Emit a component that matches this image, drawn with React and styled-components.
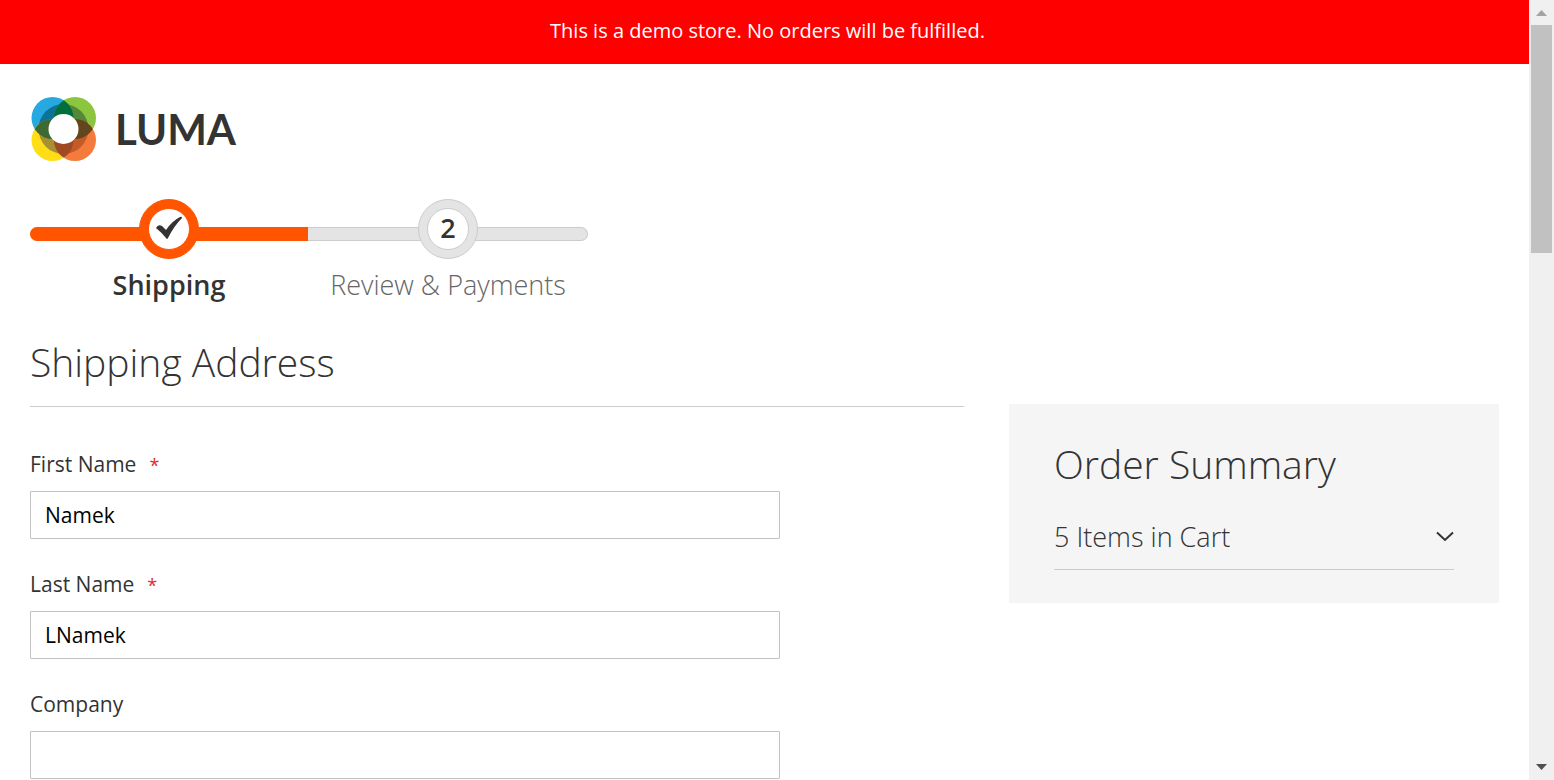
import React from 'react';
import styled, { createGlobalStyle } from 'styled-components';

const GlobalStyle = createGlobalStyle`
  *, *::before, *::after { box-sizing: border-box; }
  body {
    margin: 0;
    background: #fff;
    color: #333;
    font-family: 'Open Sans', 'Noto Sans', sans-serif;
    font-size: 21px;
  }
  h1, h2, p, ol { margin: 0; padding: 0; font-weight: 300; }
`;

const Viewport = styled.div`
  display: grid;
  grid-template-columns: minmax(0, 1fr) 25px;
  height: 100vh;
  overflow: hidden;
`;

const Page = styled.div`
  min-width: 0;
  overflow: hidden;
`;

const Scrollbar = styled.div`
  display: flex;
  flex-direction: column;
  align-items: center;
  justify-content: space-between;
  padding: 0 2px;
  background: #f0f0f0;
`;

const ScrollArrow = styled.svg`
  display: block;
  width: 21px;
  height: 25px;
`;

const ScrollTrack = styled.div`
  flex: 1;
  width: 100%;
`;

const ScrollThumb = styled.div`
  height: 31.2%;
  background: #c1c1c1;
`;

const Notice = styled.p`
  padding: 16px 32px 18px 38px;
  background: #f00;
  color: #fff;
  font-size: 20px;
  line-height: 30px;
  font-weight: 400;
  text-align: center;
`;

const Content = styled.main`
  padding: 32px 30px 0;
`;

const LogoLink = styled.a`
  display: inline-flex;
  align-items: center;
  gap: 18px;
  height: 66px;
  color: #333;
  text-decoration: none;
  vertical-align: top;
`;

const LogoMark = styled.svg`
  display: block;
  width: 67px;
  height: 66px;
`;

const LogoName = styled.span`
  font-family: Lato, 'Open Sans', sans-serif;
  font-size: 42px;
  line-height: 66px;
  font-weight: 700;
`;

const Steps = styled.ol`
  display: grid;
  grid-template-columns: 278px 280px;
  margin-top: 37px;
  list-style: none;
`;

const Step = styled.li`
  display: grid;
  grid-template-rows: 60px auto;
  justify-items: center;
  font-size: 27px;
  line-height: 36px;
  font-weight: ${(p) => (p.$active ? 600 : 300)};
  color: ${(p) => (p.$active ? '#333' : '#666')};
`;

const StepBar = styled.span`
  grid-area: 1 / 1;
  width: 100%;
  height: 14px;
  margin-top: 28px;
  border: 1px solid ${(p) => (p.$active ? '#ff5501' : '#ccc')};
  border-left-width: ${(p) => (p.$active ? '1px' : '0')};
  border-right-width: ${(p) => (p.$active ? '0' : '1px')};
  border-radius: ${(p) => (p.$active ? '7px 0 0 7px' : '0 7px 7px 0')};
  background: ${(p) => (p.$active ? '#ff5501' : '#e4e4e4')};
`;

const StepBadge = styled.span`
  grid-area: 1 / 1;
  display: grid;
  width: 60px;
  height: 60px;
  padding: 8px;
  border: 1px solid ${(p) => (p.$active ? '#ff5501' : '#ccc')};
  border-radius: 50%;
  background: ${(p) => (p.$active ? '#ff5501' : '#e4e4e4')};
`;

const StepMark = styled.span`
  display: grid;
  place-items: center;
  padding-bottom: 2px;
  border: 1px solid ${(p) => (p.$active ? '#ff5501' : '#ccc')};
  border-radius: 50%;
  background: #fff;
  color: #333;
  font-weight: 600;
`;

const StepLabel = styled.span`
  margin-top: 8px;
`;

const Columns = styled.div`
  display: grid;
  grid-template-columns: minmax(0, 934fr) minmax(0, 490fr);
  column-gap: 45px;
  align-items: start;
  margin-top: 33px;
`;

const Title = styled.h1`
  padding-bottom: 18px;
  border-bottom: 1px solid #ccc;
  font-size: 39px;
  line-height: 52px;
`;

const Form = styled.form`
  display: grid;
  row-gap: 30px;
  width: 750px;
  max-width: 100%;
  margin-top: 42px;
`;

const Field = styled.div`
  display: grid;
  row-gap: 12px;
`;

const FieldLabel = styled.label`
  line-height: 30px;
`;

const Required = styled.span`
  margin-left: 13px;
  color: #e02b27;
  font-size: 18px;
  line-height: 1;
`;

const TextInput = styled.input`
  width: 100%;
  height: 48px;
  padding: 0 14px;
  border: 1px solid #c2c2c2;
  border-radius: 1px;
  background: #fff;
  color: #000;
  font: inherit;
`;

const Summary = styled.aside`
  margin-top: 68px;
  padding: 33px 45px;
  background: #f5f5f5;
`;

const SummaryTitle = styled.h2`
  font-size: 39px;
  line-height: 54px;
`;

const CartToggle = styled.button`
  display: flex;
  align-items: center;
  justify-content: space-between;
  width: 100%;
  margin-top: 26px;
  padding: 0 0 12px;
  border: 0;
  border-bottom: 1px solid #ccc;
  background: none;
  color: #333;
  font: inherit;
  font-size: 27px;
  line-height: 40px;
  font-weight: 300;
`;

function Logo() {
  return (
    <LogoMark viewBox="0 0 67 66" aria-hidden="true">
      <defs>
        <clipPath id="tl"><circle cx="22.500" cy="22" r="21" /></clipPath>
        <clipPath id="tr"><circle cx="45" cy="22" r="21" /></clipPath>
        <clipPath id="bl"><circle cx="22.500" cy="44" r="21" /></clipPath>
        <clipPath id="br"><circle cx="45" cy="44" r="21" /></clipPath>
      </defs>
      <circle cx="22.500" cy="22" r="21" fill="#26a9e0" />
      <circle cx="45" cy="22" r="21" fill="#8cc63f" />
      <circle cx="22.500" cy="44" r="21" fill="#ffde17" />
      <circle cx="45" cy="44" r="21" fill="#f47b3c" />
      <circle cx="33.500" cy="33" r="25" fill="#0b7398" clipPath="url(#tl)" />
      <circle cx="33.500" cy="33" r="25" fill="#558739" clipPath="url(#tr)" />
      <circle cx="33.500" cy="33" r="25" fill="#a79032" clipPath="url(#bl)" />
      <circle cx="33.500" cy="33" r="25" fill="#c45a28" clipPath="url(#br)" />
      <g clipPath="url(#tl)">
        <circle cx="45" cy="22" r="21" fill="#006f3a" />
        <circle cx="22.500" cy="44" r="21" fill="#3c6a32" />
      </g>
      <g clipPath="url(#br)">
        <circle cx="45" cy="22" r="21" fill="#64461e" />
        <circle cx="22.500" cy="44" r="21" fill="#9f4a22" />
      </g>
      <circle cx="33.500" cy="33" r="15" fill="#fff" />
    </LogoMark>
  );
}

const fields = [
  { id: 'firstname', label: 'First Name', value: 'Namek', required: true },
  { id: 'lastname', label: 'Last Name', value: 'LNamek', required: true },
  { id: 'company', label: 'Company', value: '', required: false },
];

export default function App() {
  return (
    <>
      <GlobalStyle />
      <Viewport>
        <Page>
          <Notice>This is a demo store. No orders will be fulfilled.</Notice>
          <Content>
            <LogoLink href="#">
              <Logo />
              <LogoName>LUMA</LogoName>
            </LogoLink>
            <Steps>
              <Step $active>
                <StepBar $active />
                <StepBadge $active>
                  <StepMark $active>
                    <svg width="28" height="24" viewBox="0 0 28 24" aria-label="Completed">
                      <path d="M1 12Q3 8 7 10L11 14Q17 5 25 1Q27 0 27 2Q19 10 13 22Q12 24 11 22Q6 16 1 12Z" fill="#333" />
                    </svg>
                  </StepMark>
                </StepBadge>
                <StepLabel>Shipping</StepLabel>
              </Step>
              <Step>
                <StepBar />
                <StepBadge><StepMark>2</StepMark></StepBadge>
                <StepLabel>Review &amp; Payments</StepLabel>
              </Step>
            </Steps>
            <Columns>
              <section>
                <Title>Shipping Address</Title>
                <Form>
                  {fields.map((f) => (
                    <Field key={f.id}>
                      <FieldLabel htmlFor={f.id}>
                        {f.label}
                        {f.required && <Required>*</Required>}
                      </FieldLabel>
                      <TextInput id={f.id} type="text" defaultValue={f.value} required={f.required} />
                    </Field>
                  ))}
                </Form>
              </section>
              <Summary>
                <SummaryTitle>Order Summary</SummaryTitle>
                <CartToggle type="button">
                  5 Items in Cart
                  <svg width="18" height="12" viewBox="0 0 18 12" fill="none" stroke="#333" strokeWidth="2" aria-hidden="true">
                    <path d="M1 1.500L9 9L17 1.500" />
                  </svg>
                </CartToggle>
              </Summary>
            </Columns>
          </Content>
        </Page>
        <Scrollbar aria-hidden="true">
          <ScrollArrow viewBox="0 0 21 25"><path d="M5 16L10.500 10L16 16Z" fill="#a3a3a3" /></ScrollArrow>
          <ScrollTrack><ScrollThumb /></ScrollTrack>
          <ScrollArrow viewBox="0 0 21 25"><path d="M5 9L10.500 15L16 9Z" fill="#505050" /></ScrollArrow>
        </Scrollbar>
      </Viewport>
    </>
  );
}
